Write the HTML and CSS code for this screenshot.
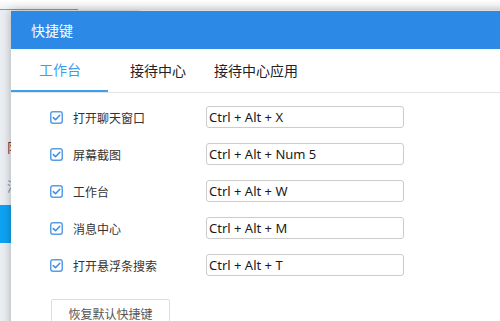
FILE: index.html
```html
<!DOCTYPE html>
<html lang="zh-CN">
<head>
<meta charset="utf-8">
<title>快捷键</title>
<link rel="stylesheet" href="styles.css">
</head>
<body>
<div class="app">
  <div class="topbar"><div class="topline"></div></div>
  <div class="main">
    <aside class="sidebar">
      <div class="side-item dark">队列管理</div>
      <div class="side-item gray">消息记录</div>
      <div class="side-item active">工作台</div>
    </aside>
    <div class="content"></div>
  </div>

  <div class="dialog">
    <div class="dialog-header">快捷键</div>
    <div class="tabs">
      <div class="tab tab-first active">工作台</div>
      <div class="tab tab-second">接待中心</div>
      <div class="tab">接待中心应用</div>
    </div>
    <div class="dialog-body">
      <div class="row">
        <span class="check"><svg viewBox="0 0 13 13" width="13" height="13"><rect x="0.75" y="0.75" width="11.5" height="11.5" rx="2.2" fill="#fff" stroke="#5b9de4" stroke-width="1.5"/><path d="M3.3 6.6 L5.5 8.8 L9.8 4.2" fill="none" stroke="#3b8ee0" stroke-width="1.5" stroke-linecap="round" stroke-linejoin="round"/></svg></span>
        <span class="label">打开聊天窗口</span>
        <div class="input">Ctrl + Alt + X</div>
      </div>
      <div class="row">
        <span class="check"><svg viewBox="0 0 13 13" width="13" height="13"><rect x="0.75" y="0.75" width="11.5" height="11.5" rx="2.2" fill="#fff" stroke="#5b9de4" stroke-width="1.5"/><path d="M3.3 6.6 L5.5 8.8 L9.8 4.2" fill="none" stroke="#3b8ee0" stroke-width="1.5" stroke-linecap="round" stroke-linejoin="round"/></svg></span>
        <span class="label">屏幕截图</span>
        <div class="input">Ctrl + Alt + Num 5</div>
      </div>
      <div class="row">
        <span class="check"><svg viewBox="0 0 13 13" width="13" height="13"><rect x="0.75" y="0.75" width="11.5" height="11.5" rx="2.2" fill="#fff" stroke="#5b9de4" stroke-width="1.5"/><path d="M3.3 6.6 L5.5 8.8 L9.8 4.2" fill="none" stroke="#3b8ee0" stroke-width="1.5" stroke-linecap="round" stroke-linejoin="round"/></svg></span>
        <span class="label">工作台</span>
        <div class="input">Ctrl + Alt + W</div>
      </div>
      <div class="row">
        <span class="check"><svg viewBox="0 0 13 13" width="13" height="13"><rect x="0.75" y="0.75" width="11.5" height="11.5" rx="2.2" fill="#fff" stroke="#5b9de4" stroke-width="1.5"/><path d="M3.3 6.6 L5.5 8.8 L9.8 4.2" fill="none" stroke="#3b8ee0" stroke-width="1.5" stroke-linecap="round" stroke-linejoin="round"/></svg></span>
        <span class="label">消息中心</span>
        <div class="input">Ctrl + Alt + M</div>
      </div>
      <div class="row">
        <span class="check"><svg viewBox="0 0 13 13" width="13" height="13"><rect x="0.75" y="0.75" width="11.5" height="11.5" rx="2.2" fill="#fff" stroke="#5b9de4" stroke-width="1.5"/><path d="M3.3 6.6 L5.5 8.8 L9.8 4.2" fill="none" stroke="#3b8ee0" stroke-width="1.5" stroke-linecap="round" stroke-linejoin="round"/></svg></span>
        <span class="label">打开悬浮条搜索</span>
        <div class="input">Ctrl + Alt + T</div>
      </div>
      <button class="reset">恢复默认快捷键</button>
    </div>
  </div>
</div>
</body>
</html>
```

FILE: styles.css
```css
html, body {
  margin: 0;
  padding: 0;
  width: 500px;
  height: 321px;
  overflow: hidden;
  background: #ffffff;
  font-family: "Noto Sans CJK SC", "Noto Sans", sans-serif;
}

.app {
  position: relative;
  width: 500px;
  height: 321px;
  overflow: hidden;
  display: flex;
  flex-direction: column;
}

.topbar {
  height: 10px;
  background: linear-gradient(#ffffff, #eceef0);
  display: flex;
  align-items: flex-end;
  flex-shrink: 0;
}

.topline {
  width: 78px;
  height: 1px;
  background: #5aa6e8;
}

.main {
  flex: 1;
  display: flex;
}

.sidebar {
  width: 140px;
  background: #eaedf1;
  padding-top: 117px;
  display: flex;
  flex-direction: column;
}

.side-item {
  height: 39px;
  line-height: 39px;
  padding-left: 7px;
  font-size: 13px;
}

.side-item.dark { color: #553344; }
.side-item.gray { color: #8090a8; }
.side-item.active {
  background: #0ea2f2;
  color: #fff;
  height: 38px;
  padding-left: 24px;
}

.content {
  flex: 1;
  background: #fff;
}

.dialog {
  position: absolute;
  left: 11px;
  top: 11px;
  width: 560px;
  height: 340px;
  background: #fff;
  box-shadow: 0 0 9px rgba(0, 0, 0, 0.28);
}

.dialog-header {
  height: 38px;
  line-height: 38px;
  padding-left: 20px;
  background: #2c89e6;
  color: #fff;
  font-size: 14px;
}

.tabs {
  display: flex;
  border-bottom: 1px solid #e4e4e4;
  box-sizing: border-box;
  height: 44px;
}

.tab {
  padding: 0 14px;
  line-height: 43px;
  font-size: 14px;
  color: #222;
  box-sizing: border-box;
}

.tab-first {
  padding: 0 27px 0 28px;
}

.tab-second {
  padding-left: 22px;
}

.tab.active {
  color: #3a9ff0;
  border-bottom: 2px solid #3aa0f0;
  line-height: 41px;
}

.dialog-body {
  padding: 13px 0 0 39px;
}

.row {
  display: flex;
  align-items: center;
  height: 22px;
  margin-bottom: 15px;
}

.check {
  width: 13px;
  height: 13px;
  display: flex;
  margin-right: 10px;
}

.label {
  width: 133px;
  font-size: 12px;
  color: #333;
}

.input {
  width: 198px;
  height: 22px;
  box-sizing: border-box;
  border: 1px solid #cccccc;
  border-radius: 3px;
  padding-left: 2px;
  font-family: "Noto Sans", sans-serif;
  font-size: 13px;
  line-height: 20px;
  color: #1a1a1a;
}

.reset {
  display: block;
  margin: 23px 0 0 1px;
  width: 119px;
  height: 28px;
  background: #fff;
  border: 1px solid #dddddd;
  border-radius: 2px;
  font-family: "Noto Sans CJK SC", sans-serif;
  font-size: 12px;
  color: #555;
  padding: 0;
}
```
